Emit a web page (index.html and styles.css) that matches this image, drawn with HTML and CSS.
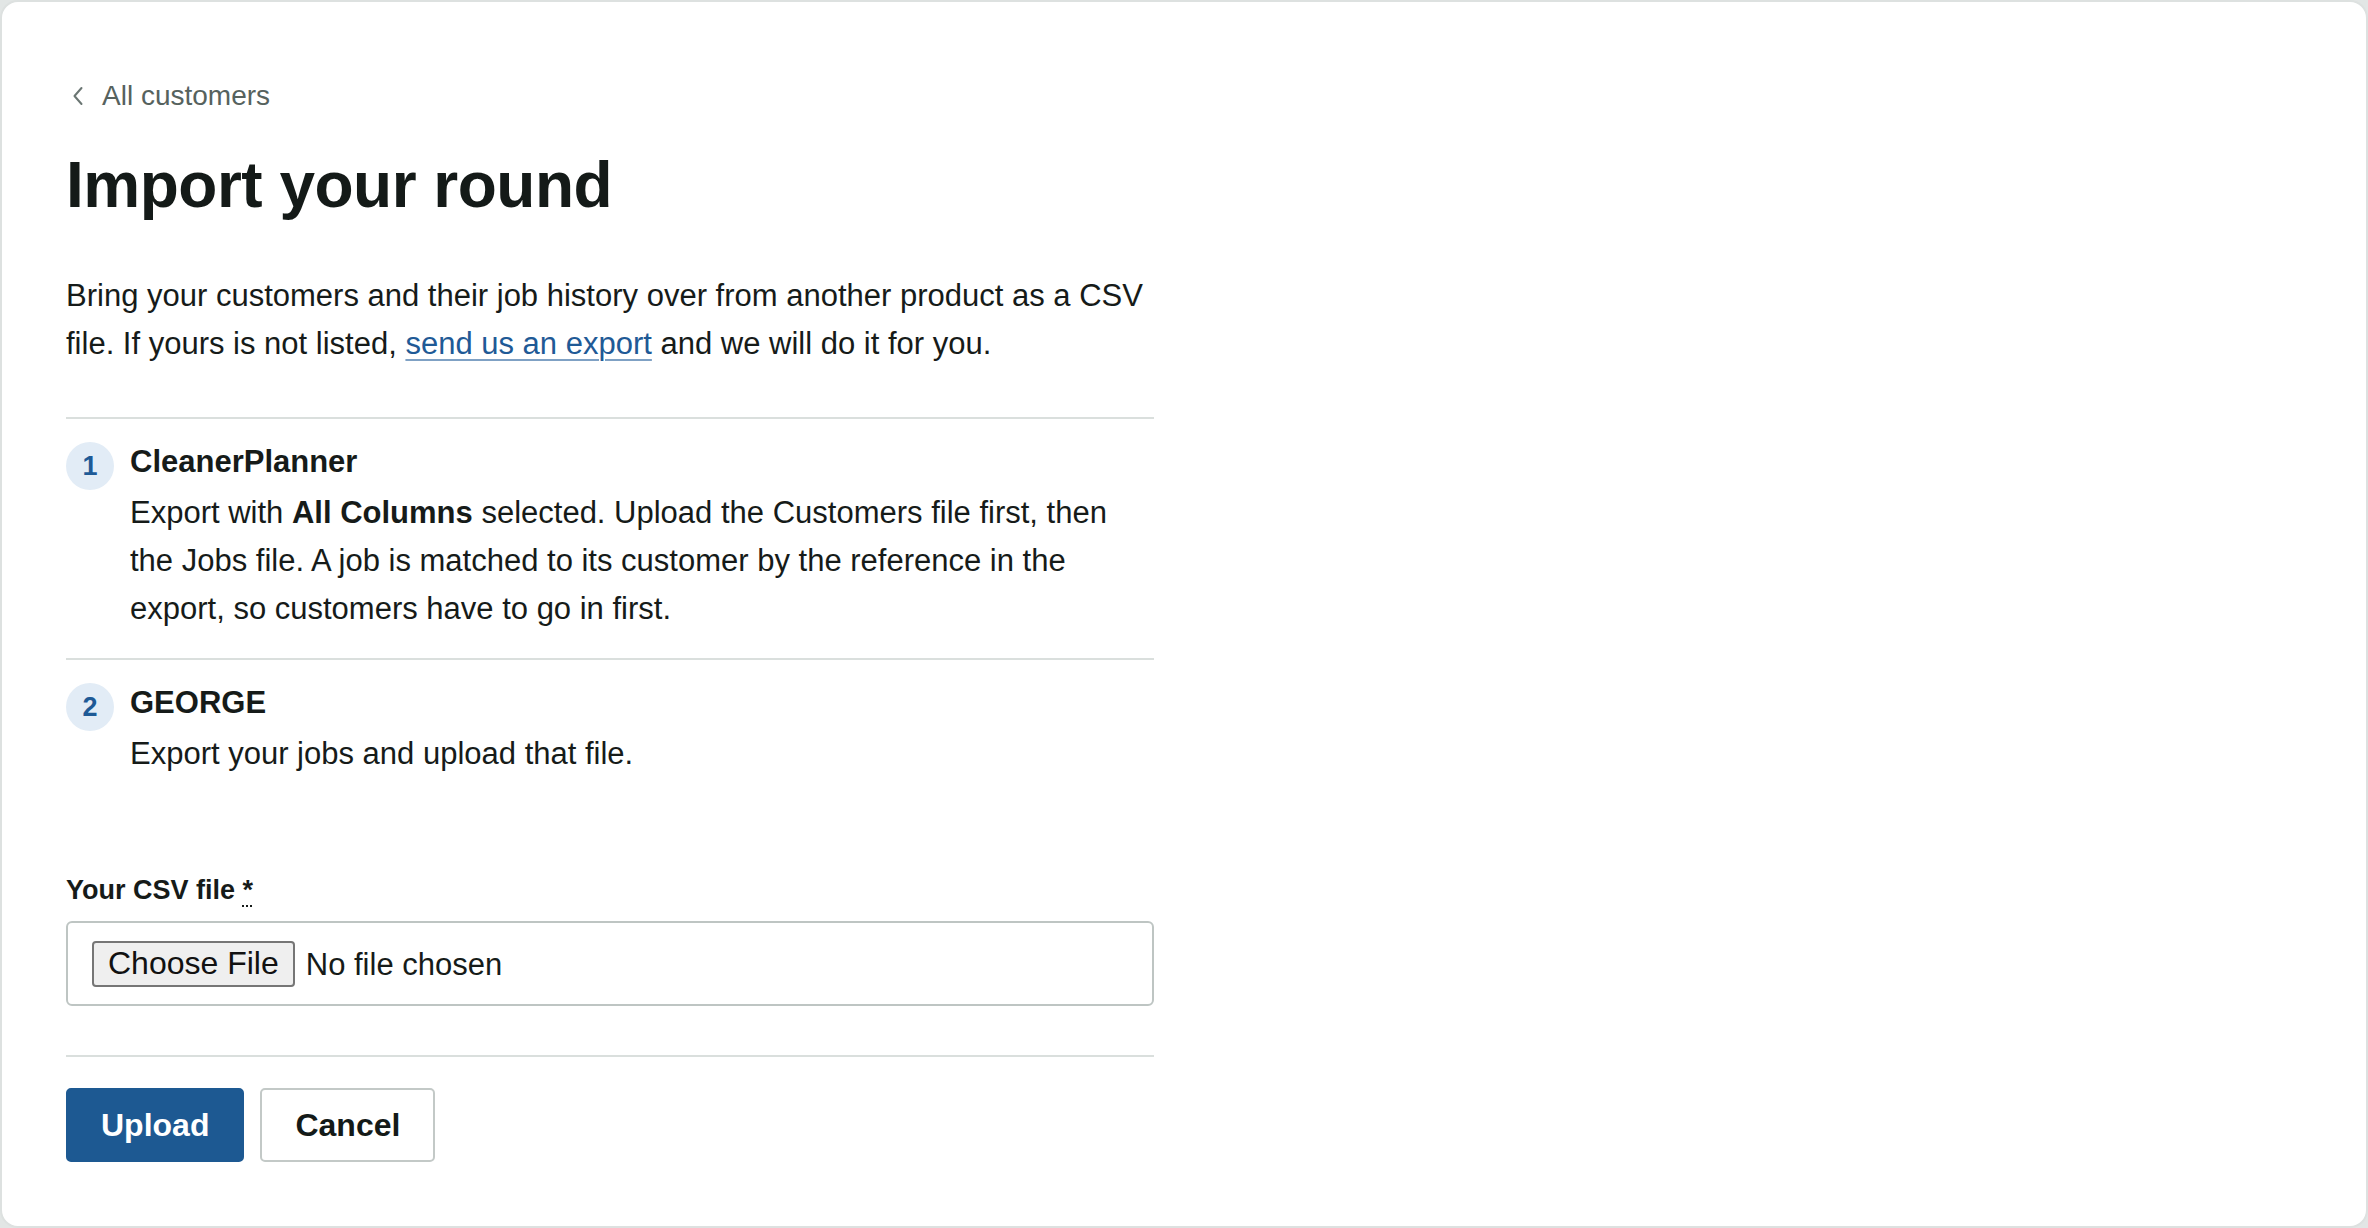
FILE: index.html
```html
<!DOCTYPE html>
<html lang="en">
<head>
<meta charset="utf-8">
<title>Import your round</title>
<link rel="stylesheet" href="styles.css">
</head>
<body>
<div class="card">
  <main class="content">
    <a class="back" href="#">
      <svg class="back-icon" viewBox="0 0 14 22" aria-hidden="true"><path d="M10.5 3 L3.5 11 L10.5 19"/></svg>
      <span>All customers</span>
    </a>
    <h1 class="title">Import your round</h1>
    <p class="intro">Bring your customers and their job history over from another product as a CSV file. If yours is not listed, <a class="link" href="#">send us an export</a> and we will do it for you.</p>

    <ol class="steps">
      <li class="step">
        <span class="step-num">1</span>
        <div class="step-body">
          <h2 class="step-title">CleanerPlanner</h2>
          <p class="step-text">Export with <strong>All Columns</strong> selected. Upload the Customers file first, then the Jobs file. A job is matched to its customer by the reference in the export, so customers have to go in first.</p>
        </div>
      </li>
      <li class="step">
        <span class="step-num">2</span>
        <div class="step-body">
          <h2 class="step-title">GEORGE</h2>
          <p class="step-text">Export your jobs and upload that file.</p>
        </div>
      </li>
    </ol>

    <form class="form">
      <label class="field-label" for="csv">Your CSV file <abbr class="req" title="required">*</abbr></label>
      <div class="file-box"><input class="file-input" type="file" id="csv" accept=".csv"></div>
      <hr class="rule">
      <div class="actions">
        <button type="submit" class="btn btn-primary">Upload</button>
        <button type="button" class="btn btn-secondary">Cancel</button>
      </div>
    </form>
  </main>
</div>
</body>
</html>
```

FILE: styles.css
```css
html, body {
  margin: 0;
  padding: 0;
}

body {
  background: #e2e6e5;
  font-family: "Liberation Sans", Arial, sans-serif;
  color: #161b19;
}

.card {
  box-sizing: border-box;
  height: 1228px;
  background: #ffffff;
  border: 2px solid #dde1e0;
  border-radius: 18px;
  padding: 74px 64px 0;
}

.content {
  width: 1088px;
  display: flex;
  flex-direction: column;
}

.back {
  display: flex;
  align-items: center;
  gap: 17px;
  height: 40px;
  color: #56625e;
  text-decoration: none;
  font-size: 28px;
  padding-left: 5px;
}

.back-icon {
  width: 14px;
  height: 22px;
  fill: none;
  stroke: #6b7673;
  stroke-width: 2;
  stroke-linecap: round;
  stroke-linejoin: round;
}

.title {
  margin: 31px 0 0;
  font-size: 64px;
  line-height: 77px;
  font-weight: 700;
  letter-spacing: -0.5px;
  color: #141a18;
}

.intro {
  margin: 48px 0 0;
  font-size: 31px;
  line-height: 48px;
}

.link {
  color: #1f5a96;
  text-decoration: underline;
  text-decoration-color: #7fa1c4;
  text-decoration-thickness: 2px;
  text-underline-offset: 5px;
}

.steps {
  list-style: none;
  margin: 49px 0 0;
  padding: 0;
  border-top: 2px solid #dadfdd;
}

.step {
  display: flex;
  gap: 16px;
  padding: 19px 0 25px;
}

.step + .step {
  border-top: 2px solid #dadfdd;
}

.step-num {
  flex: none;
  width: 48px;
  height: 48px;
  margin-top: 4px;
  border-radius: 50%;
  background: #e2ecf6;
  color: #1e5a96;
  font-weight: 700;
  font-size: 27px;
  display: flex;
  align-items: center;
  justify-content: center;
}

.step-body {
  flex: 1;
}

.step-title {
  margin: 0;
  font-size: 31px;
  line-height: 48px;
  font-weight: 700;
}

.step-text {
  margin: 3px 0 0;
  font-size: 31px;
  line-height: 48px;
}

.step-text strong {
  font-weight: 700;
}

.form {
  display: flex;
  flex-direction: column;
  margin-top: 69px;
}

.field-label {
  font-size: 27px;
  line-height: 36px;
  font-weight: 700;
}

.req {
  text-decoration: underline dotted;
  text-decoration-thickness: 2px;
  text-underline-offset: 6px;
  font-weight: 700;
}

.file-box {
  box-sizing: border-box;
  margin-top: 13px;
  height: 85px;
  border: 2px solid #bec5c3;
  border-radius: 6px;
  padding: 0 24px;
  display: flex;
  align-items: center;
}

.file-input {
  font-family: "Liberation Sans", Arial, sans-serif;
  font-size: 31px;
  color: #161b19;
}

.file-input::file-selector-button {
  font-family: "Liberation Sans", Arial, sans-serif;
  font-size: 32px;
  height: 46px;
  padding: 0 14px;
  margin-right: 11px;
  border: 2px solid #767676;
  border-radius: 4px;
  background: #efefef;
  color: #111;
}

.rule {
  margin: 49px 0 0;
  border: 0;
  border-top: 2px solid #dadfdd;
  height: 0;
}

.actions {
  display: flex;
  gap: 16px;
  margin-top: 31px;
}

.btn {
  box-sizing: border-box;
  height: 74px;
  border-radius: 5px;
  font-family: "Liberation Sans", Arial, sans-serif;
  font-size: 32px;
  font-weight: 700;
  cursor: pointer;
}

.btn-primary {
  background: #1d5992;
  color: #ffffff;
  border: 2px solid #1d5992;
  padding: 0 33px;
}

.btn-secondary {
  background: #ffffff;
  color: #141a18;
  border: 2px solid #c3c9c7;
  padding: 0 33px;
}
```
